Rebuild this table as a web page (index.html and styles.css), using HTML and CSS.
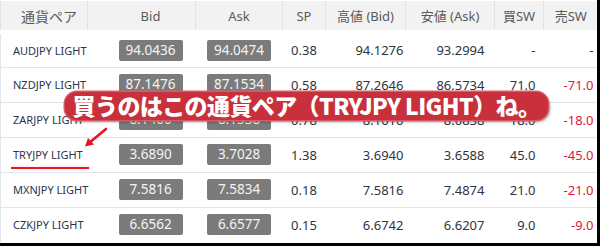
FILE: index.html
```html
<!DOCTYPE html>
<html lang="ja">
<head>
<meta charset="utf-8">
<link rel="stylesheet" href="styles.css">
</head>
<body>
<div class="frame">
  <table class="rates">
    <colgroup>
      <col class="c-name"><col class="c-bid"><col class="c-ask"><col class="c-sp"><col class="c-hi"><col class="c-lo"><col class="c-buy"><col class="c-sell">
    </colgroup>
    <thead>
      <tr>
        <th class="h-name">通貨ペア</th><th class="h-bid">Bid</th><th>Ask</th><th>SP</th><th>高値 (Bid)</th><th>安値 (Ask)</th><th>買SW</th><th>売SW</th>
      </tr>
    </thead>
    <tbody>
      <tr>
        <td class="name">AUDJPY LIGHT</td>
        <td class="box bid"><span>94.0436</span></td>
        <td class="box"><span>94.0474</span></td>
        <td class="sp">0.38</td>
        <td class="hi">94.1276</td>
        <td class="lo">93.2994</td>
        <td class="buy">-</td>
        <td class="sell">-</td>
      </tr>
      <tr>
        <td class="name">NZDJPY LIGHT</td>
        <td class="box bid"><span>87.1476</span></td>
        <td class="box"><span>87.1534</span></td>
        <td class="sp">0.58</td>
        <td class="hi">87.2646</td>
        <td class="lo">86.5734</td>
        <td class="buy">71.0</td>
        <td class="sell neg">-71.0</td>
      </tr>
      <tr>
        <td class="name">ZARJPY LIGHT</td>
        <td class="box bid"><span>8.1460</span></td>
        <td class="box"><span>8.1538</span></td>
        <td class="sp">0.78</td>
        <td class="hi">8.1610</td>
        <td class="lo">8.0838</td>
        <td class="buy">18.0</td>
        <td class="sell neg">-18.0</td>
      </tr>
      <tr>
        <td class="name"><span class="mark">TRYJPY LIGHT</span></td>
        <td class="box bid"><span>3.6890</span></td>
        <td class="box"><span>3.7028</span></td>
        <td class="sp">1.38</td>
        <td class="hi">3.6940</td>
        <td class="lo">3.6588</td>
        <td class="buy">45.0</td>
        <td class="sell neg">-45.0</td>
      </tr>
      <tr>
        <td class="name">MXNJPY LIGHT</td>
        <td class="box bid"><span>7.5816</span></td>
        <td class="box"><span>7.5834</span></td>
        <td class="sp">0.18</td>
        <td class="hi">7.5816</td>
        <td class="lo">7.4874</td>
        <td class="buy">21.0</td>
        <td class="sell neg">-21.0</td>
      </tr>
      <tr>
        <td class="name">CZKJPY LIGHT</td>
        <td class="box bid"><span>6.6562</span></td>
        <td class="box"><span>6.6577</span></td>
        <td class="sp">0.15</td>
        <td class="hi">6.6742</td>
        <td class="lo">6.6207</td>
        <td class="buy">9.0</td>
        <td class="sell neg">-9.0</td>
      </tr>
    </tbody>
  </table>

  <div class="callout">買うのはこの通貨ペア（TRYJPY LIGHT）ね。</div>

  <svg class="arrow" width="30" height="22" viewBox="0 0 30 22">
    <path d="M24 2 L7 16" stroke="#e8141e" stroke-width="2.6" stroke-linecap="round" fill="none"/>
    <path d="M3 19.5 L6 11 L12 17.5 Z" fill="#e8141e"/>
  </svg>
</div>
</body>
</html>
```

FILE: styles.css
```css
html, body {
  margin: 0;
  padding: 0;
  background: #ffffff;
}

.frame {
  position: relative;
  width: 597px;
  height: 243px;
  border-right: 3px solid #000;
  border-bottom: 3px solid #000;
  overflow: hidden;
  font-family: "Noto Sans", "Noto Sans CJK JP", sans-serif;
}

.rates {
  width: 597px;
  border-collapse: collapse;
  table-layout: fixed;
  border-left: 1px solid #e3e6ea;
}

.c-name { width: 87px; }
.c-bid { width: 108px; }
.c-ask { width: 87px; }
.c-sp { width: 43px; }
.c-hi { width: 80px; }
.c-lo { width: 89px; }
.c-buy { width: 49px; }
.c-sell { width: 54px; }

.rates thead th {
  height: 29px;
  padding: 0;
  background: #f2f2f2;
  color: #5a5a5a;
  font-weight: normal;
  font-size: 13px;
  text-align: center;
  border-left: 1px solid #dfe3e8;
  border-bottom: 1px solid #d8d8d8;
  border-top: 1px solid #ffffff;
}

.rates thead th.h-name {
  font-family: "Noto Sans CJK JP", sans-serif;
  font-size: 14px;
  padding-left: 10px;
}

.rates thead th.h-bid {
  padding-left: 18px;
}

.rates thead tr {
  border-bottom: 4px solid #ffffff;
}

.rates tbody tr {
  height: 35px;
  border-top: 1px solid #dfe5ec;
}

.rates tbody td {
  padding: 0;
  font-size: 13px;
  color: #2e3440;
  white-space: nowrap;
}

.rates td.name {
  font-size: 11px;
  padding-left: 12px;
  color: #2b3350;
}

.rates td.box {
  text-align: center;
}

.rates td.bid {
  padding-left: 18px;
}

.rates td.box span {
  display: inline-block;
  width: 64px;
  height: 21px;
  line-height: 21px;
  background: #7b7b7b;
  color: #f4f4f4;
  border-radius: 2px;
  font-size: 13.5px;
}

.rates td.sp {
  text-align: center;
}

.rates td.hi {
  text-align: right;
  padding-right: 2px;
}

.rates td.lo {
  text-align: right;
  padding-right: 10px;
}

.rates td.buy {
  text-align: right;
  padding-right: 8px;
}

.rates td.sell {
  text-align: right;
  padding-right: 4px;
}

.rates td.neg {
  color: #e3143c;
}

.mark {
  position: relative;
  display: inline-block;
}

.mark::after {
  content: "";
  position: absolute;
  left: -2px;
  right: -6px;
  bottom: -7px;
  height: 2px;
  background: #f0141e;
  box-shadow: 2px 0 3px rgba(240, 120, 230, 0.35);
}

.callout {
  position: absolute;
  left: 65px;
  top: 92px;
  width: 483px;
  height: 28px;
  line-height: 27px;
  box-sizing: border-box;
  background: #c8303c;
  border-radius: 12px;
  box-shadow: 0 0 0 1.5px #d85a66, 2px 2px 3px rgba(0, 0, 0, 0.35);
  color: #ffffff;
  font-family: "Noto Sans CJK JP", "Noto Sans", sans-serif;
  font-weight: 900;
  font-size: 23px;
  text-align: center;
  white-space: nowrap;
  letter-spacing: -0.6px;
}

.arrow {
  position: absolute;
  left: 82px;
  top: 127px;
}
```
